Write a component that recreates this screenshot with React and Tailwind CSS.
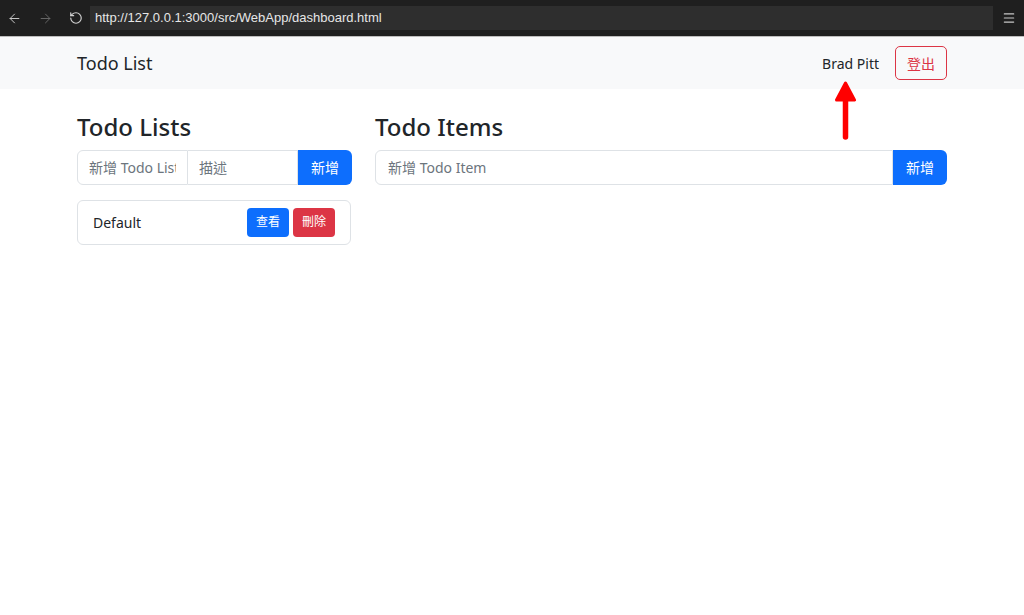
import { ArrowLeft, ArrowRight, RotateCw, Menu } from 'lucide-react';

const font = { fontFamily: '"Noto Sans", "Noto Sans CJK TC", sans-serif' };

export default function App() {
    return (
        <div className="w-[1024px] h-[615px] bg-white overflow-hidden text-[#212529]" style={font}>
            {/* browser chrome */}
            <div className="h-[37px] bg-[#1f1f1f] flex items-center border-b border-[#bdbdbd]">
                <div className="flex items-center w-[90px] pl-[7px] gap-[16px]">
                    <ArrowLeft size={15} strokeWidth={1.5} className="text-[#d0d0d0]" />
                    <ArrowRight size={15} strokeWidth={1.5} className="text-[#6a6a6a]" />
                    <RotateCw size={14} strokeWidth={2} className="text-[#d0d0d0] -scale-x-100" />
                </div>
                <div className="w-[903px] h-[24px] bg-[#2e2e2e] flex items-center px-[5px] text-[13px] text-[#e6e6e6]" style={{ fontFamily: '"Liberation Sans", sans-serif' }}>
                    http://127.0.0.1:3000/src/WebApp/dashboard.html
                </div>
                <div className="flex-1 flex justify-center">
                    <Menu size={14} strokeWidth={2} className="text-[#c8c8c8]" />
                </div>
            </div>

            {/* navbar */}
            <div className="relative h-[52px] bg-[#f8f9fa]">
                <div className="w-[870px] mx-auto h-full flex items-center">
                    <div className="text-[18px] text-[#212529]">Todo List</div>
                    <div className="ml-auto flex items-center">
                        <span className="text-[14px] text-[#212529] mr-[16px]">Brad Pitt</span>
                        <button className="h-[34px] px-[11px] border border-[#dc3545] rounded-[5px] text-[#dc3545] text-[14px]">
                            登出
                        </button>
                    </div>
                </div>
                <svg className="absolute left-[834px] top-[44px]" width="23" height="59" viewBox="0 0 23 59">
                    <path d="M11.5 56 L11.5 12" stroke="#ff0000" strokeWidth="5.5" strokeLinecap="round" />
                    <path d="M2.5 19 L11.5 2 L20.5 19 Z" fill="#ff0000" stroke="#ff0000" strokeWidth="3" strokeLinejoin="round" />
                </svg>
            </div>

            {/* content */}
            <div className="w-[870px] mx-auto flex gap-[23px] pt-[24px]">
                <div className="w-[275px]">
                    <h2 className="text-[24px] font-medium leading-[1.2] mb-[8px]">Todo Lists</h2>
                    <div className="flex h-[35px]">
                        <input
                            placeholder="新增 Todo List"
                            className="w-[111px] min-w-0 border border-[#dee2e6] rounded-l-[6px] px-[11px] text-[14px] placeholder:text-[#6c757d] outline-none"
                        />
                        <input
                            placeholder="描述"
                            className="w-[110px] min-w-0 border border-l-0 border-[#dee2e6] px-[11px] text-[14px] placeholder:text-[#6c757d] outline-none"
                        />
                        <button className="flex-1 bg-[#0d6efd] text-white text-[14px] rounded-r-[6px]">新增</button>
                    </div>
                    <div className="mt-[15px] w-[274px] h-[45px] border border-[#dee2e6] rounded-[6px] flex items-center pl-[15px] pr-[15px]">
                        <span className="text-[14px]">Default</span>
                        <div className="ml-auto flex gap-[4px]">
                            <button className="h-[29px] px-[9px] bg-[#0d6efd] text-white text-[12px] rounded-[4px]">查看</button>
                            <button className="h-[29px] px-[9px] bg-[#dc3545] text-white text-[12px] rounded-[4px]">刪除</button>
                        </div>
                    </div>
                </div>
                <div className="flex-1">
                    <h2 className="text-[24px] font-medium leading-[1.2] mb-[8px]">Todo Items</h2>
                    <div className="flex h-[35px]">
                        <input
                            placeholder="新增 Todo Item"
                            className="flex-1 min-w-0 border border-[#dee2e6] rounded-l-[6px] px-[12px] text-[14px] placeholder:text-[#6c757d] outline-none"
                        />
                        <button className="w-[54px] bg-[#0d6efd] text-white text-[14px] rounded-r-[6px]">新增</button>
                    </div>
                </div>
            </div>
        </div>
    );
}
